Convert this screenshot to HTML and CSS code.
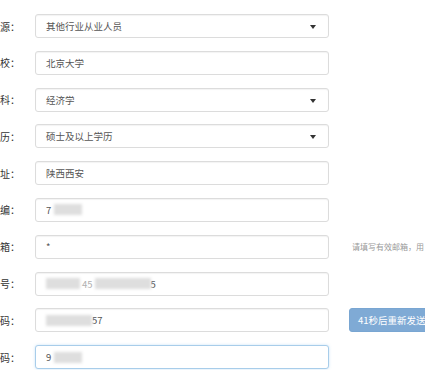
FILE: index.html
```html
<!DOCTYPE html>
<html lang="zh-CN">
<head>
    <meta charset="UTF-8">
    <meta name="viewport" content="width=device-width, initial-scale=1.0">
    <title>报名信息</title>
    <link rel="stylesheet" href="styles.css">
</head>
<body>
    <div class="form-wrap">
        <div class="form-row">
            <label class="row-label">源：</label>
            <div class="field select">其他行业从业人员<span class="caret"></span></div>
        </div>
        <div class="form-row">
            <label class="row-label">校：</label>
            <div class="field">北京大学</div>
        </div>
        <div class="form-row">
            <label class="row-label">科：</label>
            <div class="field select">经济学<span class="caret"></span></div>
        </div>
        <div class="form-row">
            <label class="row-label">历：</label>
            <div class="field select">硕士及以上学历<span class="caret"></span></div>
        </div>
        <div class="form-row">
            <label class="row-label">址：</label>
            <div class="field">陕西西安</div>
        </div>
        <div class="form-row">
            <label class="row-label">编：</label>
            <div class="field">7<span class="blur w-short"></span></div>
        </div>
        <div class="form-row">
            <label class="row-label">箱：</label>
            <div class="field">*</div>
            <span class="hint">请填写有效邮箱，用</span>
        </div>
        <div class="form-row">
            <label class="row-label">号：</label>
            <div class="field"><span class="blur w-a"></span><span class="faint">45</span><span class="blur w-b"></span>5</div>
        </div>
        <div class="form-row">
            <label class="row-label">码：</label>
            <div class="field"><span class="blur w-mid"></span>57</div>
            <button class="send-btn" type="button">41秒后重新发送</button>
        </div>
        <div class="form-row">
            <label class="row-label">码：</label>
            <div class="field focus">9<span class="blur w-short"></span></div>
        </div>
    </div>
</body>
</html>
```

FILE: styles.css
```css
/* form layout */
html, body {
    margin: 0;
    background-color: #ffffff;
    overflow: hidden;
}
body {
    font-family: "Noto Sans CJK SC", "Noto Sans", sans-serif;
    font-size: 9.5px;
    color: #555555;
}
.form-wrap {
    padding-top: 14px;
}
.form-row {
    display: flex;
    align-items: center;
    height: 24px;
    margin-bottom: 12.8px;
}
.row-label {
    width: 20px;
    margin-left: 0;
    margin-right: 15px;
    color: #333333;
    font-size: 10px;
    white-space: nowrap;
    flex-shrink: 0;
}
.field {
    position: relative;
    box-sizing: border-box;
    width: 294px;
    height: 24px;
    padding: 0 10px;
    display: flex;
    align-items: center;
    border: 1px solid #dcdcdc;
    border-radius: 3px;
    background-color: #ffffff;
    box-shadow: inset 0 1px 1px rgba(0,0,0,0.05);
    white-space: nowrap;
    flex-shrink: 0;
}
.field.focus {
    border-color: #a8cdea;
    box-shadow: 0 0 3px rgba(102,175,233,0.35);
}
.caret {
    position: absolute;
    right: 12px;
    top: 10px;
    width: 0;
    height: 0;
    border-left: 3.5px solid transparent;
    border-right: 3.5px solid transparent;
    border-top: 4px solid #333333;
}
.blur {
    display: inline-block;
    height: 11px;
    background-color: #dedede;
    filter: blur(1.5px);
}
.w-short { width: 28px; margin-left: 3px; }
.w-a { width: 34px; }
.w-b { width: 56px; }
.w-mid { width: 46px; }
.faint {
    color: #b0b0b0;
    margin: 0 2px;
}
.hint {
    margin-left: 23px;
    font-size: 8px;
    color: #999999;
    white-space: nowrap;
}
.send-btn {
    margin-left: 20px;
    height: 24px;
    padding: 0 8px;
    border: 1px solid #79a6d2;
    border-radius: 3px;
    background-color: #7faad5;
    color: #ffffff;
    font-family: "Noto Sans CJK SC", sans-serif;
    font-size: 9.5px;
    white-space: nowrap;
    flex-shrink: 0;
}
```
